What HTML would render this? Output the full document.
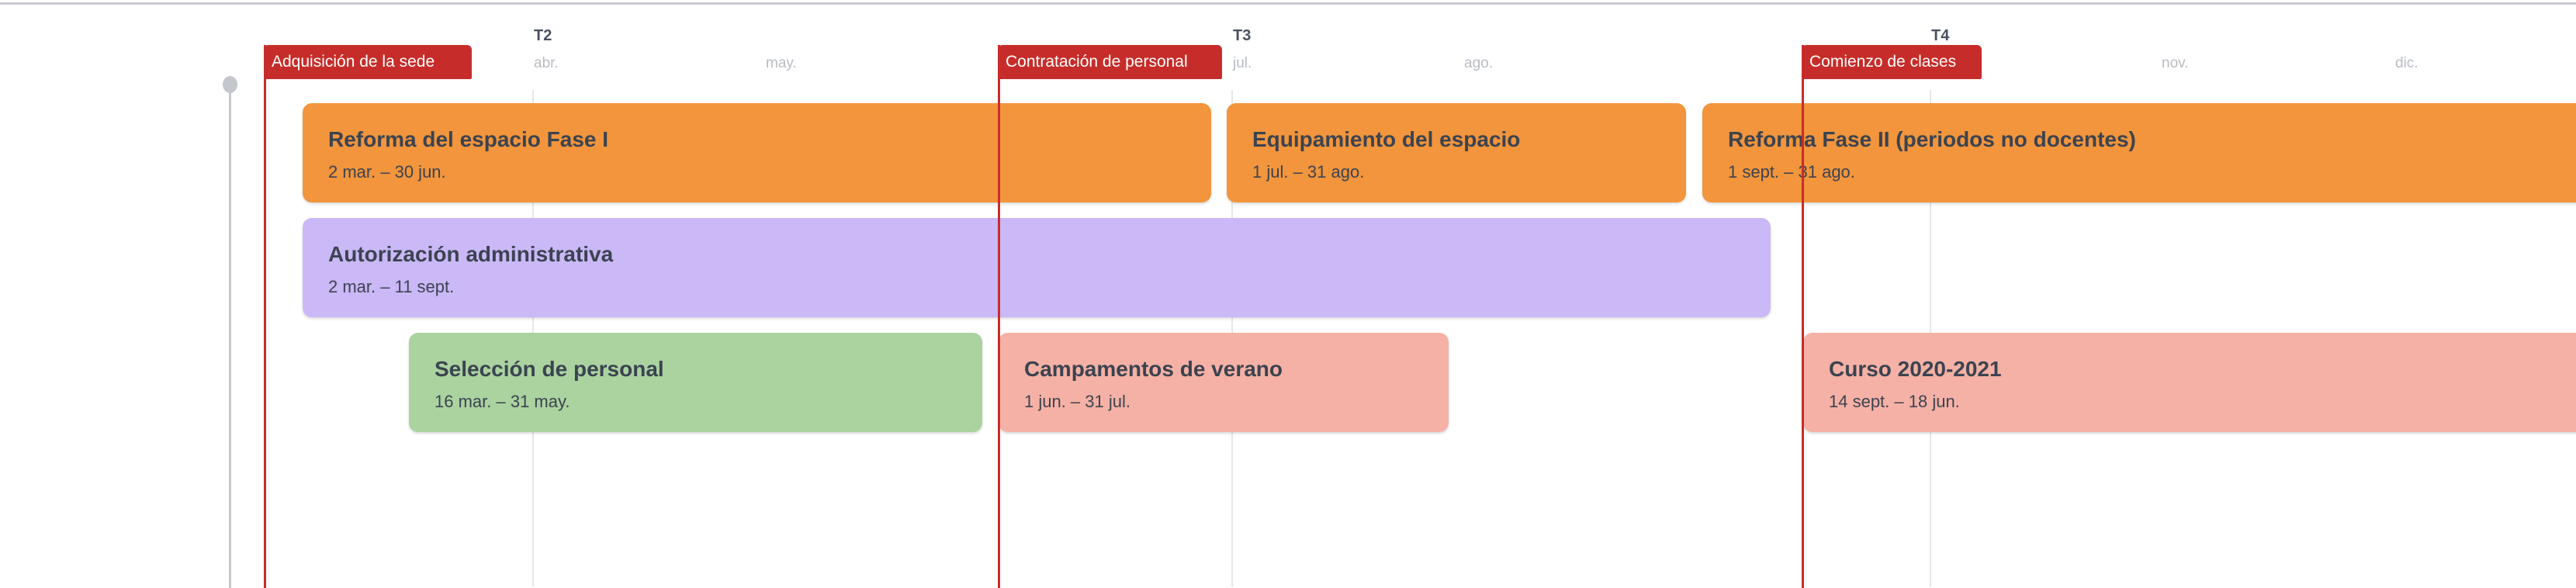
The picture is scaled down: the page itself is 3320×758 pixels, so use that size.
<!DOCTYPE html>
<html><head><meta charset="utf-8"><style>
body{margin:0;width:3320px;height:750px;overflow:hidden;background:#fff;font-family:"Liberation Sans",sans-serif;position:relative}
div{position:absolute;box-sizing:border-box}
.top{left:0;top:3px;width:3320px;height:3px;background:#c9cbcf}
.grid{top:116px;width:2px;height:640px;background:#e6e7e9}
.red{top:58px;width:3px;height:700px;background:#c62d2a}
.flag{top:58px;height:44px;background:#c62d2a;color:#fff;font-size:21px;line-height:44px;padding-left:10px;border-radius:6px 6px 2px 2px;white-space:nowrap}
.q{top:35px;font-size:20px;font-weight:bold;color:#4a5260}
.m{top:71px;font-size:19px;color:#b8bcc2}
.bar{height:128px;border-radius:12px;box-shadow:0 2px 3px rgba(0,0,0,.15);padding:30px 0 0 33px;color:#3b4350;white-space:nowrap}
.bar b{display:block;font-size:28px;font-weight:bold;line-height:34px}
.bar span{display:block;font-size:22px;margin-top:12px}
.o{background:#f2953c}.p{background:#cab8f7}.g{background:#abd3a0}.k{background:#f5b1a5}
</style></head><body>
<div class="top"></div>
<div style="left:295px;top:108px;width:3px;height:650px;background:#c4c7cc"></div>
<div style="left:287px;top:98px;width:19px;height:22px;border-radius:50%;background:#c4c7cc"></div>
<div class="grid" style="left:686px"></div>
<div class="grid" style="left:1587px"></div>
<div class="grid" style="left:2487px"></div>
<div class="q" style="left:688px">T2</div>
<div class="q" style="left:1589px">T3</div>
<div class="q" style="left:2489px">T4</div>
<div class="m" style="left:688px">abr.</div>
<div class="m" style="left:987px">may.</div>
<div class="m" style="left:1589px">jul.</div>
<div class="m" style="left:1887px">ago.</div>
<div class="m" style="left:2786px">nov.</div>
<div class="m" style="left:3087px">dic.</div>
<div class="bar o" style="left:390px;top:133px;width:1171px"><b>Reforma del espacio Fase I</b><span>2 mar. – 30 jun.</span></div>
<div class="bar o" style="left:1581px;top:133px;width:592px"><b>Equipamiento del espacio</b><span>1 jul. – 31 ago.</span></div>
<div class="bar o" style="left:2194px;top:133px;width:1200px"><b>Reforma Fase II (periodos no docentes)</b><span>1 sept. – 31 ago.</span></div>
<div class="bar p" style="left:390px;top:281px;width:1892px"><b>Autorización administrativa</b><span>2 mar. – 11 sept.</span></div>
<div class="bar g" style="left:527px;top:429px;width:739px"><b>Selección de personal</b><span>16 mar. – 31 may.</span></div>
<div class="bar k" style="left:1287px;top:429px;width:580px"><b>Campamentos de verano</b><span>1 jun. – 31 jul.</span></div>
<div class="bar k" style="left:2324px;top:429px;width:1100px"><b>Curso 2020-2021</b><span>14 sept. – 18 jun.</span></div>
<div class="red" style="left:340px"></div>
<div class="red" style="left:1286px"></div>
<div class="red" style="left:2322px"></div>
<div class="flag" style="left:340px;width:268px">Adquisición de la sede</div>
<div class="flag" style="left:1286px;width:289px">Contratación de personal</div>
<div class="flag" style="left:2322px;width:232px">Comienzo de clases</div>
</body></html>
